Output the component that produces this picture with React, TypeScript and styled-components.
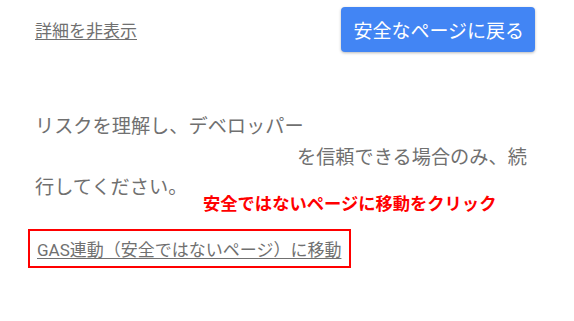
import styled, { createGlobalStyle } from 'styled-components';

const GlobalStyle = createGlobalStyle`
  html, body {
    margin: 0;
    padding: 0;
    background: #ffffff;
  }
  body {
    font-family: Roboto, "Noto Sans CJK JP", "Noto Sans", sans-serif;
  }
`;

const Page = styled.div`
  position: relative;
  width: 574px;
  height: 321px;
  box-sizing: border-box;
  padding: 7px 39px 0 35px;
  overflow: hidden;
`;

const TopRow = styled.div`
  display: flex;
  align-items: center;
  justify-content: space-between;
`;

const TextLink = styled.a<{ $size: number }>`
  color: #707070;
  font-size: ${({ $size }) => $size}px;
  text-decoration: underline;
  text-underline-offset: 2px;
  cursor: pointer;
`;

const BackButton = styled.button`
  height: 45px;
  padding: 0 11px 0 12px;
  border: none;
  border-radius: 4px;
  background: #4285f4;
  color: #ffffff;
  font-family: inherit;
  font-size: 19px;
  box-shadow: 0 1px 3px rgba(0, 0, 0, 0.28);
  cursor: pointer;
`;

const Explanation = styled.p`
  margin: 60px 0 0;
  color: #707070;
  font-size: 19.2px;
  line-height: 30.5px;
`;

const Redacted = styled.span`
  display: inline-block;
  width: 262px;
`;

const Highlight = styled.div`
  display: inline-flex;
  align-items: center;
  height: 35px;
  margin: 25px 0 0 -7px;
  padding: 0 8px 0 7px;
  border: 2px solid #ff0000;
`;

const Annotation = styled.div`
  position: absolute;
  left: 203px;
  top: 192px;
  color: #ff0000;
  font-size: 17.3px;
  font-weight: 700;
  line-height: 24px;
  white-space: nowrap;
`;

export default function App() {
  return (
    <>
      <GlobalStyle />
      <Page>
        <TopRow>
          <TextLink $size={17}>詳細を非表示</TextLink>
          <BackButton>安全なページに戻る</BackButton>
        </TopRow>
        <Explanation>
          リスクを理解し、デベロッパー
          <br />
          <Redacted />
          を信頼できる場合のみ、続行してください。
        </Explanation>
        <Highlight>
          <TextLink $size={17}>GAS連動（安全ではないページ）に移動</TextLink>
        </Highlight>
        <Annotation>安全ではないページに移動をクリック</Annotation>
      </Page>
    </>
  );
}
